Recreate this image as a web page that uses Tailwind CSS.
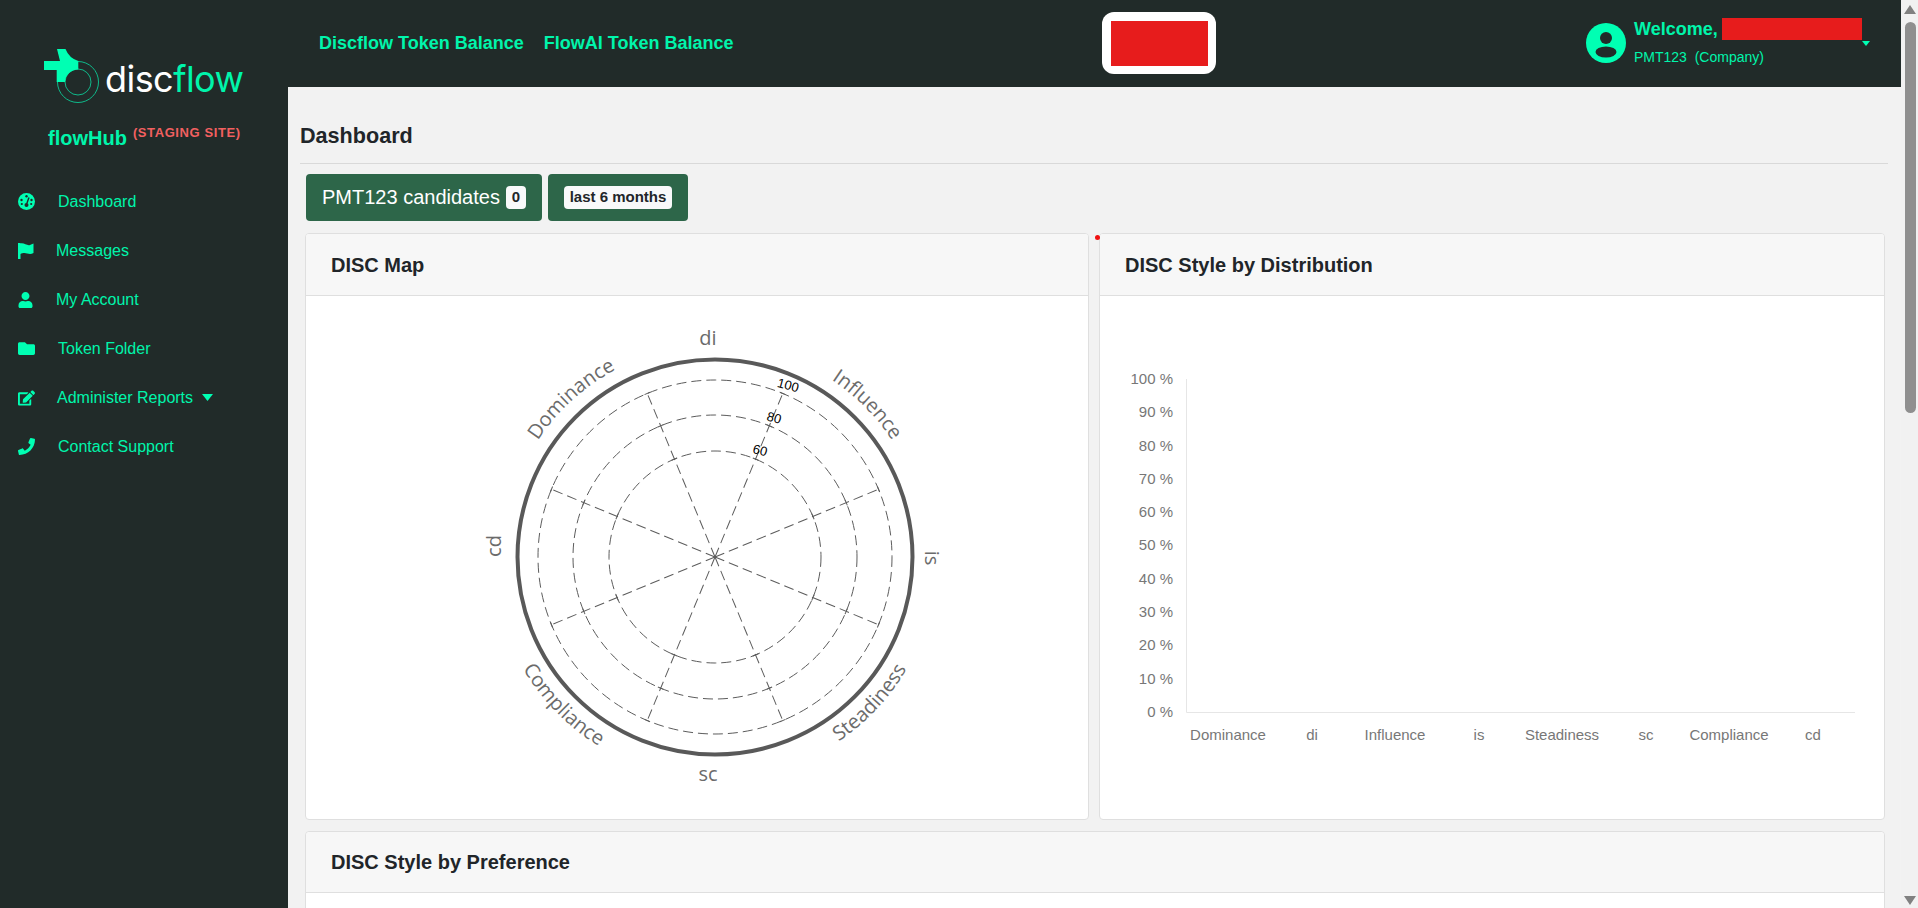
<!DOCTYPE html>
<html lang="en">
<head>
  <meta charset="UTF-8">
  <title>flowHub - Dashboard</title>
  <script src="https://cdn.jsdelivr.net/npm/@tailwindcss/browser@4"></script>
</head>
<body class="font-['Liberation_Sans',sans-serif] text-[#212529]">
  <div class="flex h-[908px] w-[1918px] overflow-hidden">

    <!-- sidebar -->
    <aside class="w-[288px] shrink-0 bg-[#212b29] text-[#00f5ab]">
      <div class="flex items-start pl-[44px] pt-[49px]">
        <svg class="w-[56px] h-[54px] shrink-0" viewBox="44 49 56 54">
          <circle cx="78" cy="82" r="20.5" fill="none" stroke="#0fb98a" stroke-width="1"/>
          <circle cx="78" cy="82" r="13" fill="none" stroke="#0fb98a" stroke-width="1"/>
          <path d="M44 61H60L57 49H65.5Q69 58 78.3 61V69.5A13 13 0 0 0 65 82H56.7V70H44Z" fill="#00ffb3"/>
        </svg>
        <div class="ml-[5px] mt-[10px] font-['Inter',sans-serif] text-[36px] leading-[40px] tracking-[-0.55px] text-white">disc<span class="text-[#00f5ab]">flow</span></div>
      </div>
      <div class="flex items-start pl-[48px] mt-[23px]">
        <span class="text-[20px] font-bold leading-[24px]">flowHub</span>
        <span class="ml-[6px] text-[13px] font-bold leading-[13px] tracking-[0.6px] text-[#f26060]">(STAGING SITE)</span>
      </div>

      <nav class="mt-[27px] pl-[18px] text-[16px]">
        <a class="flex items-center h-[49px] gap-[23px]">
          <svg class="w-[17px] h-[17px]" viewBox="0 0 17 17">
            <circle cx="8.5" cy="8.5" r="8.5" fill="#00ffb3"/>
            <circle cx="8.5" cy="3.2" r="1.2" fill="#212b29"/><circle cx="3.5" cy="7" r="1.2" fill="#212b29"/><circle cx="13.5" cy="7" r="1.2" fill="#212b29"/><circle cx="3.8" cy="11" r="1.1" fill="#212b29"/><circle cx="13.2" cy="11" r="1.1" fill="#212b29"/>
            <path d="M11 4.5L8.8 10.5" stroke="#212b29" stroke-width="1.4"/><circle cx="8.5" cy="12" r="2" fill="#212b29"/>
          </svg>
          <span>Dashboard</span>
        </a>
        <a class="flex items-center h-[49px] gap-[22px]">
          <svg class="w-[16px] h-[16px]" viewBox="0 0 16 16"><path d="M0 0H2.5V16H0ZM2.5 .5C6 -.5 9 3 12 2L15.5 .5V10C12 12 9 10 6.5 10C5 10 3.5 10.3 2.5 11Z" fill="#00ffb3"/></svg>
          <span>Messages</span>
        </a>
        <a class="flex items-center h-[49px] gap-[23px]">
          <svg class="w-[15px] h-[16px]" viewBox="0 0 448 512"><path d="M224 256c70.7 0 128-57.3 128-128S294.7 0 224 0 96 57.3 96 128s57.3 128 128 128zm89.6 32h-16.7c-22.2 10.2-46.9 16-72.9 16s-50.6-5.8-72.9-16h-16.7C60.2 288 0 348.2 0 422.4V464c0 26.5 21.5 48 48 48h352c26.5 0 48-21.5 48-48v-41.6c0-74.2-60.2-134.4-134.4-134.4z" fill="#00ffb3"/></svg>
          <span>My Account</span>
        </a>
        <a class="flex items-center h-[49px] gap-[23px]">
          <svg class="w-[17px] h-[17px]" viewBox="0 0 512 512"><path d="M464 128H272l-64-64H48C21.49 64 0 85.49 0 112v288c0 26.51 21.49 48 48 48h416c26.51 0 48-21.49 48-48V176c0-26.51-21.49-48-48-48z" fill="#00ffb3"/></svg>
          <span>Token Folder</span>
        </a>
        <a class="flex items-center h-[49px] gap-[22px]">
          <svg class="w-[17px] h-[16px]" viewBox="0 0 576 512"><path d="M402.6 83.2l90.2 90.2c3.8 3.8 3.8 10 0 13.8L274.4 405.6l-92.8 10.3c-12.4 1.4-22.9-9.1-21.5-21.5l10.3-92.8L388.8 83.2c3.8-3.8 10-3.8 13.8 0zm162-22.9l-48.8-48.8c-15.2-15.2-39.9-15.2-55.2 0l-35.4 35.4c-3.8 3.8-3.8 10 0 13.8l90.2 90.2c3.8 3.8 10 3.8 13.8 0l35.4-35.4c15.2-15.3 15.2-40 0-55.2zM384 346.2V448H64V128h229.8c3.2 0 6.2-1.3 8.5-3.5l40-40c7.6-7.6 2.2-20.5-8.5-20.5H48C21.5 64 0 85.5 0 112v352c0 26.5 21.5 48 48 48h352c26.5 0 48-21.5 48-48V306.2c0-10.7-12.9-16-20.5-8.5l-40 40c-2.2 2.3-3.5 5.3-3.5 8.5z" fill="#00ffb3"/></svg>
          <span>Administer Reports</span>
          <svg class="-ml-[13px] w-[11px] h-[7px]" viewBox="0 0 11 7"><path d="M0 0H11L5.5 7Z" fill="#00ffb3"/></svg>
        </a>
        <a class="flex items-center h-[49px] gap-[23px]">
          <svg class="w-[17px] h-[17px]" viewBox="0 0 512 512"><path d="M493.4 24.6l-104-24c-11.3-2.6-22.9 3.3-27.5 13.9l-48 112c-4.2 9.8-1.4 21.3 6.9 28l60.6 49.6c-36 76.7-98.9 140.5-177.2 177.2l-49.6-60.6c-6.8-8.3-18.2-11.1-28-6.9l-112 48C3.9 366.5-2 378.1.6 389.4l24 104C27.1 504.2 36.7 512 48 512c256.1 0 464-207.5 464-464 0-11.2-7.7-20.9-18.6-23.4z" fill="#00ffb3"/></svg>
          <span>Contact Support</span>
        </a>
      </nav>
    </aside>

    <!-- main column -->
    <div class="flex-1 min-w-0 bg-[#f2f2f2]">
      <header class="h-[87px] bg-[#212b29] flex items-center pl-[31px]">
        <div class="flex gap-[20px] w-[783px] text-[18px] font-bold text-[#00f5ab]">
          <span>Discflow Token Balance</span>
          <span>FlowAI Token Balance</span>
        </div>
        <div class="w-[114px] h-[62px] mb-[1px] bg-white rounded-[12px] flex items-center justify-center">
          <div class="w-[97px] h-[45px] bg-[#e71c1c]"></div>
        </div>
        <div class="ml-[370px] w-[40px] h-[40px] mb-[1px]">
          <svg class="w-[40px] h-[40px]" viewBox="0 0 40 40">
            <circle cx="20" cy="20" r="20" fill="#00ffb3"/>
            <circle cx="20" cy="15" r="6" fill="#212b29"/>
            <ellipse cx="20" cy="29" rx="10.5" ry="5.5" fill="#212b29"/>
          </svg>
        </div>
        <div class="ml-[8px] h-[87px] w-[241px] text-[#00f5ab]">
          <div class="flex items-start pt-[18px]">
            <span class="text-[18px] font-bold leading-[22px]">Welcome,</span>
            <span class="ml-[4px] w-[140px] h-[22px] bg-[#e71c1c]"></span>
            <svg class="w-[8px] h-[5px] mt-[23px]" viewBox="0 0 8 5"><path d="M0 0H8L4 5Z" fill="#00ffb3"/></svg>
          </div>
          <div class="mt-[3px] text-[14px] leading-[16px]">PMT123 &nbsp;(Company)</div>
        </div>
      </header>

      <div class="pl-[12px] pr-[13px]">
        <h1 class="h-[77px] pt-[36px] text-[21.6px] leading-[26px] font-bold border-b border-[#d9d9d9]">Dashboard</h1>

        <div class="flex gap-[6px] pl-[6px] mt-[10px]">
          <div class="h-[47px] w-[236px] rounded-[4px] bg-[#2d6649] flex items-center pl-[16px] gap-[6px] text-white text-[20px]">
            <span class="mb-[2px]">PMT123 candidates</span>
            <span class="w-[20px] h-[23px] rounded-[4px] bg-[#f8f9fa] text-[#212529] text-[15px] font-bold flex items-center justify-center">0</span>
          </div>
          <div class="h-[47px] w-[140px] rounded-[4px] bg-[#2d6649] flex items-center justify-center">
            <span class="w-[108px] h-[23px] rounded-[4px] bg-[#f8f9fa] text-[15px] font-bold flex items-center justify-center">last 6 months</span>
          </div>
        </div>

        <div class="relative flex gap-[10px] pl-[5px] mt-[12px]">
          <div class="absolute left-[795px] top-[2px] w-[5px] h-[5px] rounded-full bg-[#f01010]"></div>

          <section class="w-[784px] h-[587px] rounded-[4px] border border-[#dfdfdf] bg-white overflow-hidden">
            <h2 class="h-[62px] pl-[25px] flex items-center bg-[#f7f7f7] border-b border-[#dfdfdf] text-[20px] font-bold">DISC Map</h2>
            <svg class="w-[782px] h-[524px]" viewBox="306 296 782 524" font-family="'Open Sans',sans-serif">
              <defs>
                <path id="arcTop" d="M503 557A212 212 0 0 1 927 557"/>
                <path id="arcBottom" d="M493 557A222 222 0 0 0 937 557"/>
                <g id="spoke" stroke="#5c5c5c" stroke-width="1">
                  <line x1="715" y1="557" x2="715" y2="380" stroke-dasharray="10 5"/>
                  <line x1="712" y1="380" x2="718" y2="380"/>
                  <line x1="712" y1="415" x2="718" y2="415"/>
                  <line x1="712" y1="451" x2="718" y2="451"/>
                </g>
              </defs>
              <g fill="none">
                <circle cx="715" cy="557" r="197.5" stroke="#595959" stroke-width="4"/>
                <g stroke="#5c5c5c" stroke-width="1" stroke-dasharray="10 5">
                  <circle cx="715" cy="557" r="177"/>
                  <circle cx="715" cy="557" r="142"/>
                  <circle cx="715" cy="557" r="106"/>
                </g>
              </g>
              <use href="#spoke" transform="rotate(22.5 715 557)"/>
              <use href="#spoke" transform="rotate(67.5 715 557)"/>
              <use href="#spoke" transform="rotate(112.5 715 557)"/>
              <use href="#spoke" transform="rotate(157.5 715 557)"/>
              <use href="#spoke" transform="rotate(202.5 715 557)"/>
              <use href="#spoke" transform="rotate(247.5 715 557)"/>
              <use href="#spoke" transform="rotate(292.5 715 557)"/>
              <use href="#spoke" transform="rotate(337.5 715 557)"/>

              <g font-size="20" fill="#6b6b6b">
                <text text-anchor="middle"><textPath href="#arcTop" startOffset="26.5%">Dominance</textPath></text>
                <text text-anchor="middle"><textPath href="#arcTop" startOffset="75%">Influence</textPath></text>
                <text text-anchor="middle"><textPath href="#arcBottom" startOffset="24.6%">Compliance</textPath></text>
                <text text-anchor="middle"><textPath href="#arcBottom" startOffset="76%">Steadiness</textPath></text>
                <text x="708" y="345" text-anchor="middle">di</text>
                <text x="708" y="781" text-anchor="middle">sc</text>
                <text transform="translate(501 546) rotate(-90)" text-anchor="middle">cd</text>
                <text transform="translate(925 558) rotate(90)" text-anchor="middle">is</text>
              </g>
              <g font-family="'Liberation Sans',sans-serif" font-size="13" fill="#000" text-anchor="middle">
                <text transform="translate(787 389.5) rotate(15)">100</text>
                <text transform="translate(773 422) rotate(15)">80</text>
                <text transform="translate(759 454.5) rotate(15)">60</text>
              </g>
            </svg>
          </section>

          <section class="w-[786px] h-[587px] rounded-[4px] border border-[#dfdfdf] bg-white overflow-hidden">
            <h2 class="h-[62px] pl-[25px] flex items-center bg-[#f7f7f7] border-b border-[#dfdfdf] text-[20px] font-bold">DISC Style by Distribution</h2>
            <svg class="w-[784px] h-[524px]" viewBox="1100 296 784 524" font-family="'Liberation Sans',sans-serif" font-size="15" fill="#777">
              <path d="M1186.5 379V712.5H1855" fill="none" stroke="#e6e6e6" stroke-width="1"/>
              <g text-anchor="end">
                <text x="1173" y="384">100 %</text>
                <text x="1173" y="417">90 %</text>
                <text x="1173" y="451">80 %</text>
                <text x="1173" y="484">70 %</text>
                <text x="1173" y="517">60 %</text>
                <text x="1173" y="550">50 %</text>
                <text x="1173" y="584">40 %</text>
                <text x="1173" y="617">30 %</text>
                <text x="1173" y="650">20 %</text>
                <text x="1173" y="684">10 %</text>
                <text x="1173" y="717">0 %</text>
              </g>
              <g text-anchor="middle">
                <text x="1228" y="740">Dominance</text>
                <text x="1312" y="740">di</text>
                <text x="1395" y="740">Influence</text>
                <text x="1479" y="740">is</text>
                <text x="1562" y="740">Steadiness</text>
                <text x="1646" y="740">sc</text>
                <text x="1729" y="740">Compliance</text>
                <text x="1813" y="740">cd</text>
              </g>
            </svg>
          </section>
        </div>

        <section class="ml-[5px] mt-[11px] w-[1580px] h-[200px] rounded-[4px] border border-[#dfdfdf] bg-white">
          <h2 class="h-[61px] pl-[25px] flex items-center bg-[#f7f7f7] border-b border-[#dfdfdf] rounded-t-[4px] text-[20px] font-bold">DISC Style by Preference</h2>
        </section>
      </div>
    </div>

    <!-- page scrollbar -->
    <div class="w-[17px] shrink-0 bg-[#f1f1f1] flex flex-col items-center">
      <svg class="w-[17px] h-[17px] shrink-0" viewBox="0 0 17 17"><path d="M9 5L15 14H3Z" fill="#808080"/></svg>
      <div class="w-[11px] h-[391px] mt-[5px] ml-[2px] rounded-t-[6px] rounded-b-[6px] bg-[#8f8f8f]"></div>
      <svg class="w-[17px] h-[17px] shrink-0 mt-auto" viewBox="0 0 17 17"><path d="M9 14L15 5H3Z" fill="#808080"/></svg>
    </div>
  </div>
</body>
</html>
